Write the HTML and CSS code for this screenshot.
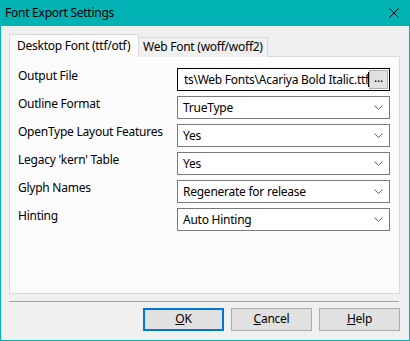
FILE: index.html
```html
<!DOCTYPE html>
<html>
<head>
<meta charset="utf-8">
<link rel="stylesheet" href="styles.css">
</head>
<body>
<div class="window">
  <div class="titlebar">
    <span class="title">Font Export Settings</span>
    <svg class="close" width="10" height="10" viewBox="0 0 10 10"><path d="M0.5 0.5 L9.5 9.5 M9.5 0.5 L0.5 9.5" stroke="#000" stroke-width="1" fill="none"/></svg>
  </div>
  <div class="content">
    <div class="tabs">
      <div class="tab active">Desktop Font (ttf/otf)</div>
      <div class="tab">Web Font (woff/woff2)</div>
    </div>
    <div class="panel">
      <div class="form">
        <div class="label">Output File</div>
        <div class="field file">
          <div class="filetext"><span>ts\Web Fonts\Acariya Bold Italic.ttf</span><span class="caret"></span></div>
          <div class="browse">...</div>
        </div>
        <div class="label">Outline Format</div>
        <div class="field combo"><span>TrueType</span><svg class="chev" width="9" height="5" viewBox="0 0 9 5"><path d="M0.5 0.5 L4.5 4.5 L8.5 0.5" stroke="#606060" fill="none"/></svg></div>
        <div class="label">OpenType Layout Features</div>
        <div class="field combo"><span>Yes</span><svg class="chev" width="9" height="5" viewBox="0 0 9 5"><path d="M0.5 0.5 L4.5 4.5 L8.5 0.5" stroke="#606060" fill="none"/></svg></div>
        <div class="label">Legacy 'kern' Table</div>
        <div class="field combo"><span>Yes</span><svg class="chev" width="9" height="5" viewBox="0 0 9 5"><path d="M0.5 0.5 L4.5 4.5 L8.5 0.5" stroke="#606060" fill="none"/></svg></div>
        <div class="label">Glyph Names</div>
        <div class="field combo"><span>Regenerate for release</span><svg class="chev" width="9" height="5" viewBox="0 0 9 5"><path d="M0.5 0.5 L4.5 4.5 L8.5 0.5" stroke="#606060" fill="none"/></svg></div>
        <div class="label">Hinting</div>
        <div class="field combo"><span>Auto Hinting</span><svg class="chev" width="9" height="5" viewBox="0 0 9 5"><path d="M0.5 0.5 L4.5 4.5 L8.5 0.5" stroke="#606060" fill="none"/></svg></div>
      </div>
    </div>
    <div class="separator"></div>
    <div class="buttons">
      <div class="btn default"><u>O</u>K</div>
      <div class="btn"><u>C</u>ancel</div>
      <div class="btn"><u>H</u>elp</div>
    </div>
  </div>
</div>
</body>
</html>
```
FILE: styles.css
```css
* { box-sizing: border-box; }
html, body { margin: 0; padding: 0; }
body {
  width: 410px;
  height: 341px;
  overflow: hidden;
  font-family: "Noto Sans", "DejaVu Sans", sans-serif;
  font-size: 12px;
  letter-spacing: -0.25px;
  color: #000;
}
.window {
  width: 410px;
  height: 341px;
  border: 1px solid #00b2b4;
  border-top: none;
  background: #f0f0f0;
  display: flex;
  flex-direction: column;
}
.titlebar {
  height: 26px;
  background: #00b2b4;
  margin: 0 -1px;
  display: flex;
  align-items: center;
  justify-content: space-between;
  padding: 0 11px 0 5px;
  flex: none;
}
.title { font-size: 12px; line-height: 16px; }
.close { display: block; }
.content {
  flex: 1;
  display: flex;
  flex-direction: column;
  padding: 8px 9px 0 8px;
}
.tabs {
  display: flex;
  align-items: flex-end;
  height: 23px;
  position: relative;
  z-index: 1;
  margin-bottom: -1px;
}
.tab {
  height: 20px;
  padding: 0 4px 0 4px;
  width: 129px;
  border: 1px solid #d9d9d9;
  border-bottom: none;
  border-left: none;
  background: #f0f0f0;
  line-height: 18px;
  white-space: nowrap;
}
.tab.active {
  width: 130px;
  height: 23px;
  border-left: 1px solid #d9d9d9;
  background: #fcfcfc;
  padding-left: 7px;
  line-height: 21px;
}
.panel {
  height: 238px;
  border: 1px solid #d9d9d9;
  background: #fcfcfc;
  padding: 11px 9px 0 8px;
}
.form {
  display: grid;
  grid-template-columns: 159px 213px;
  grid-auto-rows: 23px;
  row-gap: 5px;
}
.label {
  line-height: 16px;
  padding-top: 0px;
  white-space: nowrap;
}
.field {
  background: #fff;
  border: 1px solid #7a7a7a;
  display: flex;
  align-items: center;
  white-space: nowrap;
}
.combo {
  justify-content: space-between;
  padding: 0 6px 0 5px;
}
.chev { display: block; }
.file {
  border-color: #000;
  padding: 1px;
}
.filetext {
  flex: 1;
  overflow: hidden;
  display: flex;
  justify-content: flex-end;
  align-items: center;
  min-width: 0;
}
.caret {
  display: block;
  width: 1px;
  height: 15px;
  background: #000;
  flex: none;
  margin-left: -1px;
}
.browse {
  width: 19px;
  height: 19px;
  flex: none;
  background: #e1e1e1;
  border: 1px solid #adadad;
  text-align: center;
  line-height: 14px;
  font-size: 12px;
}
.separator {
  height: 1px;
  background: #a0a0a0;
  margin-top: 7px;
  margin-right: 1px;
}
.buttons {
  display: flex;
  justify-content: flex-end;
  gap: 7px;
  margin-top: 6px;
}
.btn {
  width: 81px;
  height: 23px;
  background: #e1e1e1;
  border: 1px solid #adadad;
  text-align: center;
  line-height: 20px;
}
.btn.default {
  border: 2px solid #0078d7;
  line-height: 18px;
}
```
